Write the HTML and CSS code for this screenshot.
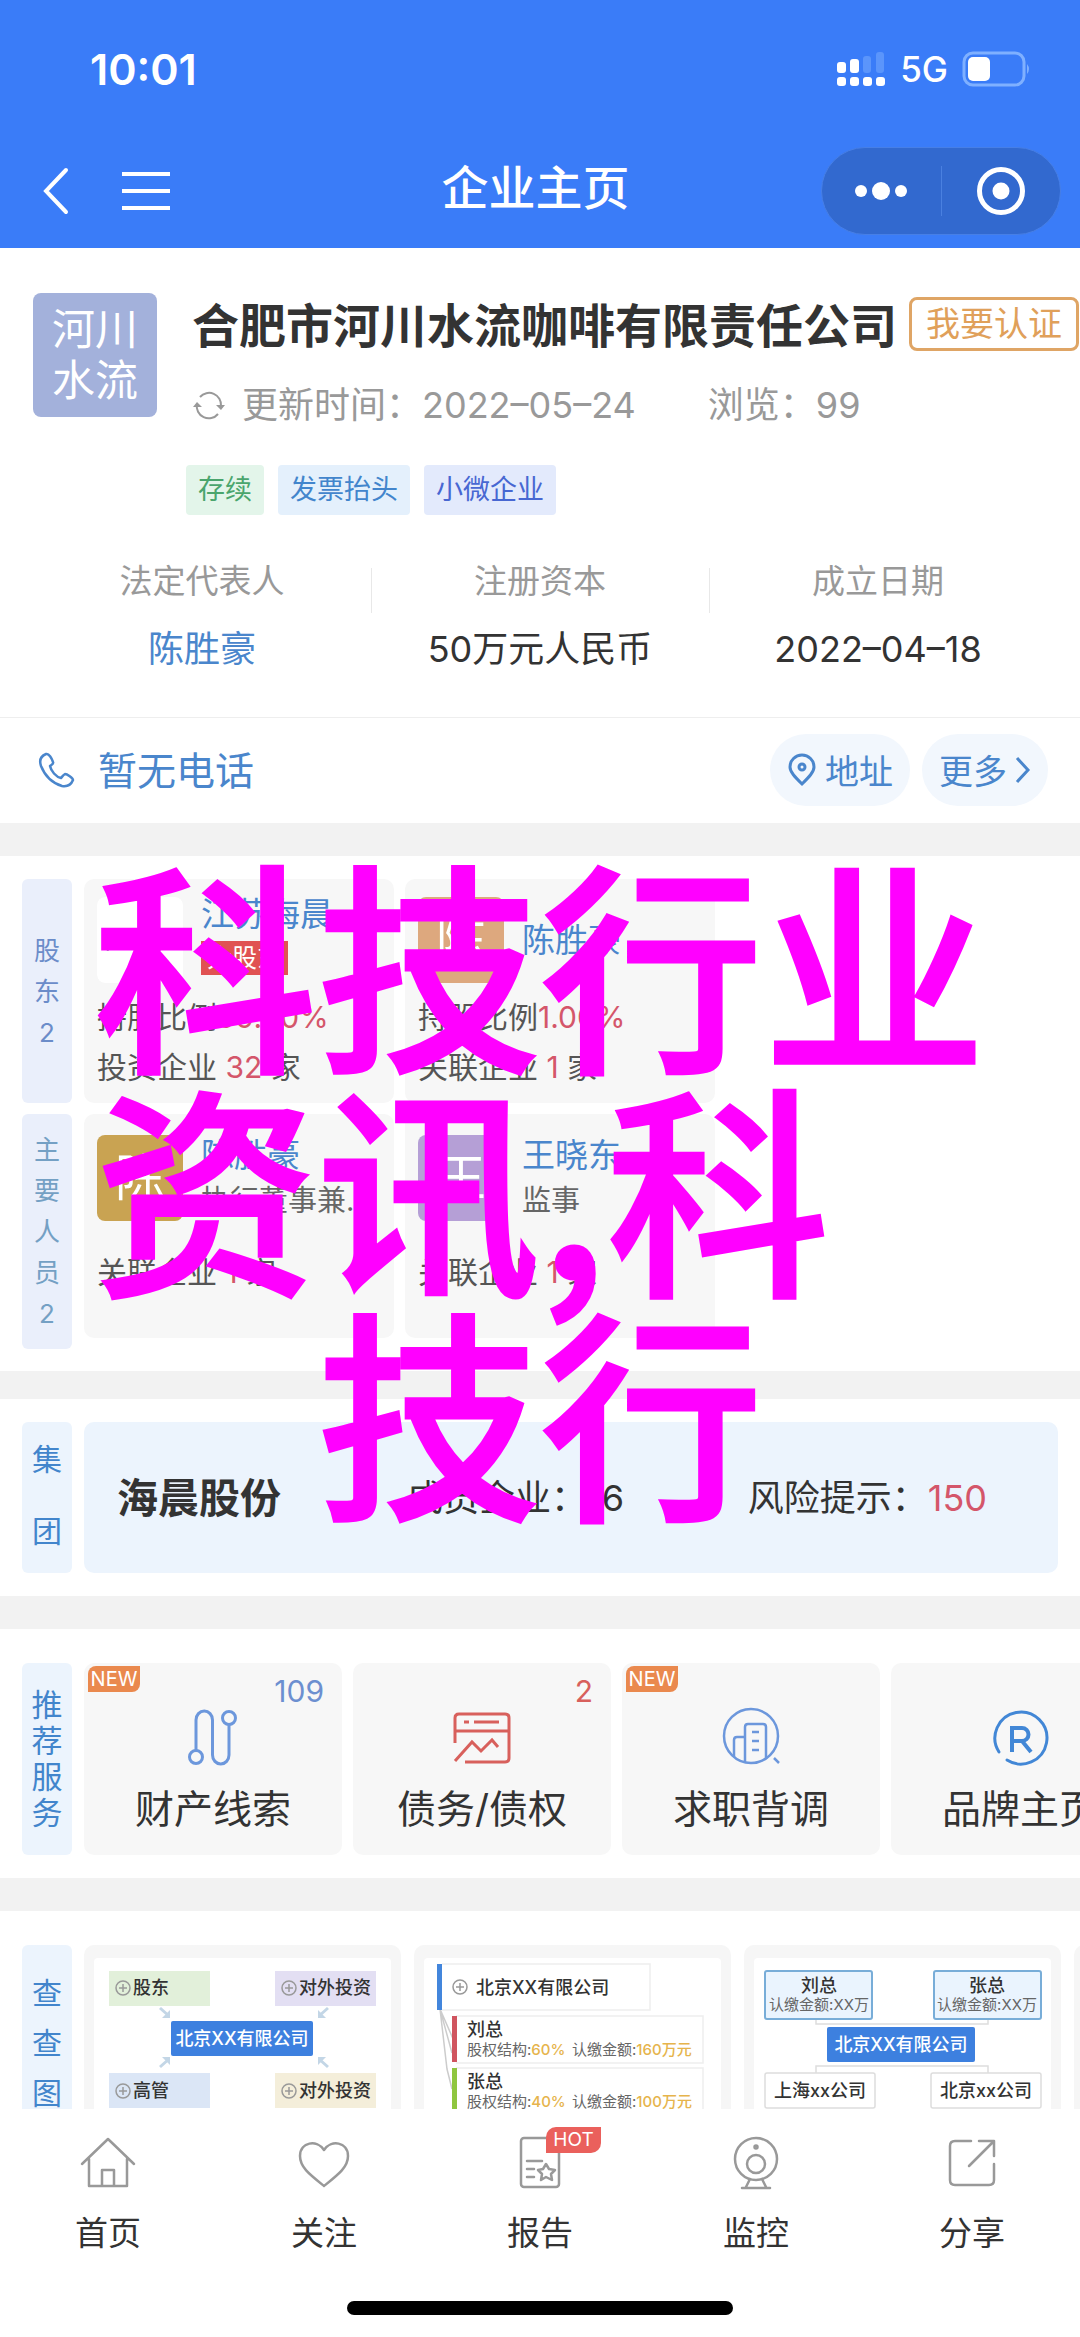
FILE: index.html
```html
<!DOCTYPE html>
<html lang="zh-CN">
<head>
<meta charset="utf-8">
<meta name="viewport" content="width=device-width, initial-scale=1">
<title>企业主页</title>
<link rel="stylesheet" href="styles.css">
</head>
<body>
<div class="app">
  <header class="header">
    <div class="status">
      <span class="clock">10:01</span>
      <div class="status-icons">
        <svg width="50" height="36" viewBox="0 0 50 36" fill="#fff" aria-hidden="true">
          <rect x="1" y="11" width="9" height="11" rx="3"/><rect x="14" y="8" width="9" height="14" rx="3"/>
          <g fill="#5b95fb"><rect x="27" y="5" width="8" height="17" rx="3"/><rect x="40" y="1" width="8" height="21" rx="3"/></g>
          <rect x="1" y="26" width="9" height="9" rx="3"/><rect x="14" y="26" width="9" height="9" rx="3"/><rect x="27" y="26" width="9" height="9" rx="3"/><rect x="40" y="26" width="9" height="9" rx="3"/>
        </svg>
        <span class="net">5G</span>
        <svg width="70" height="36" viewBox="0 0 70 36" aria-hidden="true">
          <rect x="2" y="2" width="60" height="32" rx="9" fill="none" stroke="#7fb0ff" stroke-width="3"/>
          <rect x="6" y="6" width="22" height="24" rx="5" fill="#fff"/>
          <path d="M65 13q4 5 0 10z" fill="#7fb0ff"/>
        </svg>
      </div>
    </div>
    <nav class="topbar">
      <div class="topbar-side">
        <button class="icon-btn" aria-label="返回"><svg width="28" height="50" viewBox="0 0 28 50" fill="none" stroke="#fff" stroke-width="4" stroke-linecap="round"><path d="M24 4 4 25l20 21"/></svg></button>
        <button class="icon-btn" aria-label="菜单"><svg width="48" height="40" viewBox="0 0 48 40" stroke="#fff" stroke-width="4"><path d="M0 3h48M0 20h48M0 37h48"/></svg></button>
      </div>
      <h1 class="title">企业主页</h1>
      <div class="topbar-side topbar-end">
        <div class="capsule">
          <button class="capsule-btn" aria-label="更多"><svg width="54" height="20" viewBox="0 0 54 20" fill="#fff"><circle cx="7" cy="10" r="6"/><circle cx="27" cy="10" r="9"/><circle cx="47" cy="10" r="6"/></svg></button>
          <span class="capsule-line"></span>
          <button class="capsule-btn" aria-label="关闭"><svg width="50" height="50" viewBox="0 0 50 50"><circle cx="25" cy="25" r="21.500" fill="none" stroke="#fff" stroke-width="5"/><circle cx="25" cy="25" r="8.500" fill="#fff"/></svg></button>
        </div>
      </div>
    </nav>
  </header>

  <main class="content">
    <section class="profile">
      <div class="profile-head">
        <div class="logo">河川<br>水流</div>
        <div class="profile-info">
          <div class="name-row">
            <h2 class="company">合肥市河川水流咖啡有限责任公司</h2>
            <button class="verify">我要认证</button>
          </div>
          <div class="meta">
            <svg width="34" height="32" viewBox="0 0 34 32" fill="none" stroke="#999" stroke-width="2" aria-hidden="true"><path d="M8 8a12 12 0 0 1 21 9M26 25A12 12 0 0 1 5 15"/><path d="M1 18l4-5 5 5zM24 16h9l-4 5z" fill="#999" stroke="none"/></svg>
            <span class="updated">更新时间：2022–05–24</span>
            <span>浏览：99</span>
          </div>
          <div class="tags">
            <span class="tag tag-green">存续</span>
            <span class="tag tag-sky">发票抬头</span>
            <span class="tag tag-blue">小微企业</span>
          </div>
        </div>
      </div>
      <dl class="stats">
        <div class="stat"><dt>法定代表人</dt><dd><a href="#">陈胜豪</a></dd></div>
        <div class="stat"><dt>注册资本</dt><dd>50万元人民币</dd></div>
        <div class="stat"><dt>成立日期</dt><dd>2022–04–18</dd></div>
      </dl>
      <div class="contact">
        <svg width="38" height="38" viewBox="0 0 38 38" fill="none" stroke="#4a86cc" stroke-width="2.500" stroke-linejoin="round" aria-hidden="true"><path d="M8 3C3 5 1 9 3 15c4 10 11 17 21 20 6 1 9-1 11-6 0-2-6-6-8-6-2 1-3 3-4 4-5-1-10-7-11-12 1-1 4-2 3-4-1-3-4-9-7-8z"/></svg>
        <a class="phone" href="#">暂无电话</a>
        <button class="pill">
          <svg width="30" height="34" viewBox="0 0 30 34" fill="none" stroke="#4a86cc" stroke-width="3" aria-hidden="true"><path d="M15 31C8 24 3 19 3 14a12 12 0 0 1 24 0c0 5-5 10-12 17z"/><circle cx="15" cy="14" r="3"/></svg>
          地址
        </button>
        <button class="pill">
          更多
          <svg width="16" height="28" viewBox="0 0 16 28" fill="none" stroke="#4a86cc" stroke-width="3" aria-hidden="true"><path d="M2 2l11 12L2 26"/></svg>
        </button>
      </div>
    </section>

    <section class="block people">
      <div class="row">
        <h3 class="side side-people">股东2</h3>
        <div class="track">
          <article class="person">
            <div class="person-head">
              <svg class="avatar" viewBox="0 0 86 86" aria-hidden="true"><rect width="86" height="86" rx="8" fill="#fff"/><path d="M6 50l7-9-3 12 8-12" fill="none" stroke="#222a4a" stroke-width="3"/></svg>
              <div class="person-text"><a href="#">江苏海晨</a><span class="holder">大股东</span></div>
            </div>
            <p>持股比例<b>99.00%</b></p>
            <p>投资企业 <b>32</b> 家</p>
          </article>
          <article class="person">
            <div class="person-head">
              <div class="avatar avatar-tan">陈</div>
              <div class="person-text"><a href="#">陈胜豪</a></div>
            </div>
            <p>持股比例<b>1.00%</b></p>
            <p>关联企业 <b>1</b> 家</p>
          </article>
        </div>
      </div>
      <div class="row">
        <h3 class="side side-people side-staff">主要人员2</h3>
        <div class="track">
          <article class="person staff">
            <div class="person-head">
              <div class="avatar avatar-gold">陈</div>
              <div class="person-text"><a href="#">陈胜豪</a><span class="role">执行董事兼..</span></div>
            </div>
            <p>关联企业 <b>1</b> 家</p>
          </article>
          <article class="person staff">
            <div class="person-head">
              <div class="avatar avatar-violet">王</div>
              <div class="person-text"><a href="#">王晓东</a><span class="role">监事</span></div>
            </div>
            <p>关联企业 <b>1</b> 家</p>
          </article>
        </div>
      </div>
    </section>

    <section class="block group">
      <div class="row">
        <h3 class="side side-group">集团</h3>
        <div class="group-card">
          <strong>海晨股份</strong>
          <span class="members">成员企业：16</span>
          <span class="risk">风险提示：<b>150</b></span>
        </div>
      </div>
    </section>

    <section class="block services">
      <div class="row">
        <h3 class="side side-service">推荐服务</h3>
        <div class="track">
          <button class="service">
            <span class="new">NEW</span><span class="count">109</span>
            <svg width="60" height="60" viewBox="0 0 60 60" fill="none" stroke="#6c97dc" stroke-width="3"><circle cx="13" cy="50" r="6.500"/><circle cx="46" cy="11" r="6.500"/><path d="M13 43V13a8.250 9 0 0 1 16.500 0v35a8.250 9 0 0 0 16.500 0V18"/></svg>
            <span>财产线索</span>
          </button>
          <button class="service">
            <span class="count count-red">2</span>
            <svg width="60" height="60" viewBox="0 0 60 60" fill="none" stroke="#d8605c" stroke-width="3"><path d="M3 36V11q0-4 4-4h46q4 0 4 4v40q0 4-4 4H13M3 24h54M12 15h5M22 15h25M3 54l17-19 9 9 11-11 6 7"/></svg>
            <span>债务/债权</span>
          </button>
          <button class="service">
            <span class="new">NEW</span>
            <svg width="60" height="60" viewBox="0 0 60 60" fill="none" stroke="#6c97dc" stroke-width="2.500"><circle cx="30" cy="29" r="27"/><path d="M13 50V33q0-3 3-3h8M24 55V20q0-3 3-3h15q3 0 3 3v32M31 25h7M31 34h7M31 43h7M53 51l5 5"/></svg>
            <span>求职背调</span>
          </button>
          <button class="service">
            <svg width="60" height="60" viewBox="0 0 60 60" fill="none" stroke="#4287d6" stroke-width="3"><path d="M9 45A26 26 0 1 1 17 53" stroke-linecap="round"/><path d="M22 45V21h10a6.500 6.500 0 0 1 0 13H22M32 34l9 11" stroke-width="4"/></svg>
            <span>品牌主页</span>
          </button>
        </div>
      </div>
    </section>

    <section class="block charts">
      <div class="row">
        <h3 class="side side-chart">查查图</h3>
        <div class="track">
          <a class="chart" href="#" aria-label="企业图谱">
            <svg width="317" height="164" viewBox="0 2 317 164">
              <rect x="10" y="15" width="297" height="187" rx="4" fill="#fff"/>
              <rect x="25" y="28" width="101" height="35" fill="#e2f0da"/><rect x="191" y="28" width="101" height="35" fill="#e3dff3"/>
              <rect x="25" y="130" width="101" height="35" fill="#dbe6f6"/><rect x="191" y="130" width="101" height="35" fill="#f4eeda"/>
              <rect x="87" y="78" width="142" height="35" rx="2" fill="#3d80df"/>
              <g stroke="#c3d6e6" stroke-width="3"><path d="M76 65l9 8M244 65l-9 8M76 124l9-8M244 124l-9-8"/></g>
              <g fill="#c3d6e6"><path d="M86 67v8h-8zM234 67v8h8zM86 122v-8h-8zM234 122v-8h8z"/></g>
              <g fill="none" stroke="#999" stroke-width="1.500"><circle cx="39" cy="45" r="7"/><path d="M35 45h8M39 41v8"/><circle cx="205" cy="45" r="7"/><path d="M201 45h8M205 41v8"/><circle cx="39" cy="148" r="7"/><path d="M35 148h8M39 144v8"/><circle cx="205" cy="148" r="7"/><path d="M201 148h8M205 144v8"/></g>
              <g class="node"><text x="49" y="51">股东</text><text x="215" y="51">对外投资</text><text x="49" y="154">高管</text><text x="215" y="154">对外投资</text></g>
              <text class="node node-white" x="158" y="102">北京XX有限公司</text>
            </svg>
          </a>
          <a class="chart" href="#" aria-label="股权结构">
            <svg width="317" height="164" viewBox="0 2 317 164">
              <rect x="10" y="15" width="297" height="187" rx="4" fill="#fff"/>
              <g fill="none" stroke="#eee" stroke-width="1.500"><path d="M28 21h208v46H28M42 73h247v47H42M42 125h247v47H42"/></g>
              <path d="M26 66l12 44M26 66l14 32M26 66l7 60 5 20" fill="none" stroke="#ccc" stroke-width="1.500"/>
              <rect x="23" y="21" width="5" height="46" fill="#4386dc"/><rect x="38" y="73" width="5" height="46" fill="#d0555f"/><rect x="38" y="125" width="5" height="46" fill="#8fc63f"/>
              <g fill="none" stroke="#999" stroke-width="1.500"><circle cx="46" cy="44" r="7"/><path d="M42 44h8M46 40v8"/></g>
              <g class="node"><text x="62" y="51">北京XX有限公司</text><text x="53" y="93">刘总</text><text x="53" y="145">张总</text></g>
              <g class="note"><text x="53" y="112">股权结构:<tspan class="gold">60%</tspan></text><text x="158" y="112">认缴金额:<tspan class="gold">160万元</tspan></text><text x="53" y="164">股权结构:<tspan class="gold">40%</tspan></text><text x="158" y="164">认缴金额:<tspan class="gold">100万元</tspan></text></g>
            </svg>
          </a>
          <a class="chart" href="#" aria-label="关联关系">
            <svg width="317" height="164" viewBox="0 2 317 164">
              <rect x="10" y="15" width="297" height="187" rx="4" fill="#fff"/>
              <g fill="none" stroke="#ddd" stroke-width="1.500"><path d="M72 77v4h172v-4M72 130v-7h172v7"/></g>
              <g fill="#eaf4fe" stroke="#78add8" stroke-width="2"><rect x="21" y="28" width="107" height="48" rx="2"/><rect x="190" y="28" width="107" height="48" rx="2"/></g>
              <g fill="#fff" stroke="#ddd" stroke-width="1.500"><rect x="21" y="130" width="110" height="35" rx="2"/><rect x="187" y="130" width="110" height="35" rx="2"/></g>
              <rect x="83" y="84" width="148" height="35" rx="2" fill="#3d80df"/>
              <g class="node middle"><text x="75" y="49">刘总</text><text x="243" y="49">张总</text><text x="76" y="154">上海xx公司</text><text x="242" y="154">北京xx公司</text></g>
              <g class="note middle"><text x="75" y="67">认缴金额:XX万</text><text x="243" y="67">认缴金额:XX万</text></g>
              <text class="node node-white" x="157" y="108">北京XX有限公司</text>
            </svg>
          </a>
          <a class="chart" href="#" aria-label="更多图谱"><svg width="317" height="164" viewBox="0 0 317 164"></svg></a>
        </div>
      </div>
    </section>
  </main>

  <footer class="footer">
    <nav class="tabs">
      <a class="tab" href="#"><svg width="60" height="60" viewBox="0 0 60 60"><path d="M4 31 30 6l26 25M11 26v27h38V26M24 53V37h12v16"/></svg>首页</a>
      <a class="tab" href="#"><svg width="60" height="60" viewBox="0 0 60 60"><path d="M30 53C15 41 6 34 6 23 6 9 23 6 30 17 37 6 54 9 54 23c0 11-9 18-24 30z"/></svg>关注</a>
      <a class="tab" href="#"><svg width="60" height="60" viewBox="0 0 60 60"><rect x="11" y="5" width="38" height="49" rx="3"/><path d="M17 28h15M17 36h7M17 44h7M36 31l3 5 6 1-4 4 1 6-6-3-5 3 1-6-4-4 5-1z"/></svg>报告<span class="hot">HOT</span></a>
      <a class="tab" href="#"><svg width="60" height="60" viewBox="0 0 60 60"><circle cx="30" cy="26" r="21"/><circle cx="30" cy="31" r="9"/><circle cx="30" cy="14" r="1.500"/><path d="M24 46l-4 8M36 46l4 8M16 55h28"/></svg>监控</a>
      <a class="tab" href="#"><svg width="60" height="60" viewBox="0 0 60 60"><path d="M29 8H13q-5 0-5 5v34q0 5 5 5h34q5 0 5-5V31M37 8h15v15M52 8 27 33"/></svg>分享</a>
    </nav>
    <div class="home-bar"></div>
  </footer>

  <div class="watermark">
    <div>科技行业</div>
    <div>资讯,科</div>
    <div class="watermark-last">技行</div>
  </div>
</div>
</body>
</html>
```
FILE: styles.css
```css
* { box-sizing: border-box; }
body, h1, h2, h3, p, dl, dd { margin: 0; }
body {
  font-family: Inter, "Noto Sans CJK SC", sans-serif;
  color: #333;
  background: #fff;
}
svg { display: block; flex: none; }
a { color: #4a86cc; text-decoration: none; }
button {
  font: inherit;
  color: inherit;
  background: none;
  border: 0;
  padding: 0;
}
.app {
  position: relative;
  display: flex;
  flex-direction: column;
  height: 100vh;
  overflow: hidden;
}

/* header */
.header { flex: none; background: #3a7cf8; color: #fff; }
.status {
  display: flex;
  align-items: center;
  justify-content: space-between;
  height: 138px;
  padding: 0 48px 0 90px;
}
.clock { font-size: 43px; font-weight: 600; }
.status-icons { display: flex; align-items: center; gap: 14px; }
.net { font-size: 35px; font-weight: 500; }
.topbar {
  display: flex;
  align-items: center;
  height: 110px;
  padding: 0 19px 4px 42px;
}
.topbar-side { display: flex; flex: 1; align-items: center; gap: 52px; }
.topbar-end { justify-content: flex-end; }
.title { font-size: 47px; font-weight: 500; line-height: 64px; padding: 0 32px 6px 0; }
.capsule {
  display: flex;
  align-items: center;
  width: 240px;
  height: 88px;
  border-radius: 44px;
  background: #3269cf;
  border: 1px solid #477fe6;
}
.capsule-btn { display: flex; flex: 1; justify-content: center; }
.capsule-line { width: 1px; height: 50px; background: #4a80e0; }

/* profile */
.content { flex: 1; min-height: 0; overflow: hidden; }
.profile-head { display: flex; gap: 29px; padding: 45px 0 0 33px; }
.logo {
  flex: none;
  width: 124px;
  height: 124px;
  padding-top: 11px;
  border-radius: 8px;
  background: #a3b1db;
  color: #fff;
  font-size: 43px;
  line-height: 51px;
  text-align: center;
}
.profile-info { flex: 1; min-width: 0; }
.name-row { display: flex; align-items: center; gap: 12px; height: 62px; padding-left: 6px; }
.company { padding-top: 4px; font-size: 47px; font-weight: 700; line-height: 62px; white-space: nowrap; }
.verify {
  flex: none;
  height: 54px;
  padding: 0 14px;
  border: 3px solid #dfa565;
  border-radius: 8px;
  color: #e0a05a;
  font-size: 34px;
  line-height: 48px;
}
.meta {
  display: flex;
  align-items: center;
  height: 50px;
  margin-top: 25px;
  padding-left: 6px;
  color: #999;
  font-size: 36px;
  line-height: 50px;
  white-space: nowrap;
}
.updated { margin: 0 72px 0 16px; }
.tags { display: flex; gap: 14px; margin-top: 35px; }
.tag { padding: 0 12px; border-radius: 4px; font-size: 27px; line-height: 50px; }
.tag-green { background: #e3f5ea; color: #4aa56d; }
.tag-sky { background: #e4f0fc; color: #4285cc; }
.tag-blue { background: #e3eafc; color: #4767d2; }
.stats { display: flex; padding: 42px 33px 44px; }
.stat { position: relative; flex: 1; text-align: center; line-height: 48px; }
.stat + .stat::before {
  content: "";
  position: absolute;
  left: 0;
  top: 11px;
  width: 1px;
  height: 45px;
  background: #e8e8e8;
}
.stat dt { color: #999; font-size: 33px; }
.stat dd { margin-top: 20px; font-size: 36px; }
.contact {
  display: flex;
  align-items: center;
  gap: 12px;
  height: 106px;
  padding: 0 32px 2px 38px;
  border-top: 1px solid #eee;
}
.phone { flex: 1; padding: 0 0 3px 10px; font-size: 39px; }
.pill {
  display: flex;
  align-items: center;
  gap: 8px;
  height: 72px;
  padding: 0 17px;
  border-radius: 36px;
  background: #f2f7fd;
  color: #4a86cc;
  font-size: 34px;
}

/* shared section layout */
.block { padding: 23px 0 23px 22px; border-top: 33px solid #f2f2f2; }
.row { display: flex; gap: 12px; }
.side {
  flex: none;
  display: flex;
  align-items: center;
  width: 50px;
  padding: 0 12px;
  border-radius: 6px;
  background: #ecf4fd;
  color: #4285cc;
  font-size: 26px;
  font-weight: 400;
  line-height: 41px;
  word-break: break-all;
  text-align: center;
}
.track { display: flex; flex: 1; gap: 11px; min-width: 0; overflow: hidden; }

/* shareholders and staff */
.people { padding-bottom: 22px; }
.people .row + .row { margin-top: 11px; }
.side-people { background: #eaeffb; color: #6b8cc9; }
.side-staff { padding-top: 15px; padding-bottom: 15px; color: #74a0c4; }
.person {
  flex: none;
  width: 310px;
  height: 224px;
  padding: 14px 13px 0;
  border-radius: 10px;
  background: #f7f7f7;
  color: #555;
  font-size: 30px;
  line-height: 50px;
}
.person-head { display: flex; align-items: center; gap: 18px; height: 93px; margin-bottom: 6px; }
.person-text { display: flex; flex-direction: column; align-items: flex-start; gap: 8px; font-size: 33px; line-height: 38px; white-space: nowrap; }
.person b, .group-card b { color: #d4566a; font-weight: 400; }
.avatar {
  flex: none;
  width: 86px;
  height: 86px;
  border-radius: 8px;
  color: #fff;
  font-size: 50px;
  line-height: 86px;
  text-align: center;
}
.avatar-tan { background: #dda87e; }
.avatar-gold { background: #c9a352; }
.avatar-violet { background: #b59fd6; }
.holder { margin-bottom: 10px; padding: 0 6px; background: #e05252; color: #fff; font-size: 25px; line-height: 34px; }
.role { color: #666; font-size: 29px; }
.staff { padding-top: 17px; }
.staff .person-head { margin-bottom: 23px; }

/* group */
.group { padding-right: 22px; border-top-width: 28px; }
.side-group { padding: 0 10px 6px; font-size: 30px; line-height: 72px; }
.group-card {
  display: flex;
  flex: 1;
  align-items: center;
  height: 151px;
  padding: 0 33px 6px;
  border-radius: 10px;
  background: #ecf4fd;
  font-size: 36px;
  white-space: nowrap;
}
.group-card strong { font-size: 41px; }
.members { flex: 1; margin-left: 126px; }
.risk { margin-right: 38px; }

/* services */
.services { padding-top: 34px; }
.side-service { padding: 0 9px; font-size: 31px; line-height: 36px; }
.service {
  position: relative;
  display: flex;
  flex: none;
  flex-direction: column;
  align-items: center;
  width: 258px;
  height: 192px;
  padding-top: 44px;
  border-radius: 10px;
  background: #f7f7f7;
  font-size: 39px;
  line-height: 56px;
}
.service svg { margin-bottom: 14px; }
.new {
  position: absolute;
  left: 4px;
  top: 3px;
  width: 52px;
  border-radius: 8px 0;
  background: #ea894e;
  color: #fff;
  font-size: 20px;
  line-height: 26px;
}
.count { position: absolute; right: 18px; top: 8px; color: #6c8fd0; font-size: 30px; line-height: 40px; }
.count-red { color: #d8605c; }

/* charts */
.charts { padding-top: 34px; padding-bottom: 0; }
.side-chart { align-items: flex-start; padding: 23px 10px 0; border-radius: 6px 6px 0 0; font-size: 30px; line-height: 50px; height: 164px; }
.charts .track { gap: 13px; }
.chart { flex: none; border-radius: 10px 10px 0 0; background: #f6f6f6; }
.node { fill: #333; font-size: 18px; font-weight: 500; }
.node-white { fill: #fff; text-anchor: middle; }
.middle { text-anchor: middle; }
.note { fill: #666; font-size: 15px; }
.gold { fill: #e6b44c; font-weight: 500; }

/* bottom bar */
.footer { flex: none; height: 227px; background: #fff; }
.tabs { display: flex; }
.tab {
  position: relative;
  display: flex;
  flex: 1;
  flex-direction: column;
  align-items: center;
  gap: 15px;
  padding-top: 23px;
  color: #333;
  font-size: 33px;
  line-height: 50px;
}
.tab svg { fill: none; stroke: #999; stroke-width: 2.5; stroke-linejoin: round; stroke-linecap: round; }
.hot {
  position: absolute;
  left: calc(50% + 6px);
  top: 17px;
  width: 55px;
  border-radius: 10px 0;
  background: #ea605c;
  color: #fff;
  font-size: 19px;
  line-height: 26px;
  text-align: center;
}
.home-bar { width: 386px; height: 14px; margin: 43px auto 0; border-radius: 7px; background: #000; }

.watermark {
  position: absolute;
  top: 846px;
  left: 0;
  right: 0;
  width: max-content;
  margin: 0 auto;
  color: #f0f;
  font-family: "Noto Sans CJK SC", sans-serif;
  font-size: 223px;
  font-weight: 500;
  line-height: 224px;
  -webkit-text-stroke: 3px #f0f;
  pointer-events: none;
}
.watermark-last { text-align: center; }
```
